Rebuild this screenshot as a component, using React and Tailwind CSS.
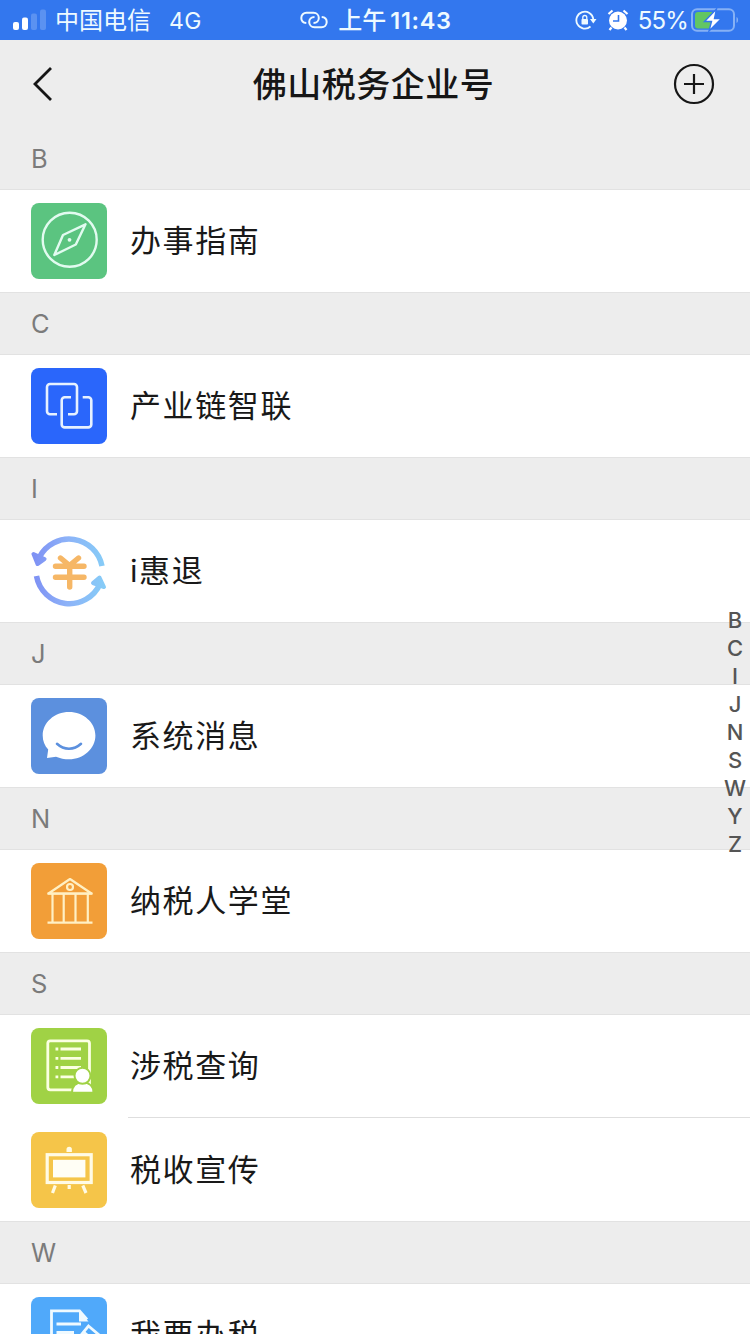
const sections = [
  { letter: 'B', items: [{ name: '办事指南', icon: CompassIcon }] },
  { letter: 'C', items: [{ name: '产业链智联', icon: ChainIcon }] },
  { letter: 'I', items: [{ name: 'i惠退', icon: RefundIcon }] },
  { letter: 'J', items: [{ name: '系统消息', icon: MessageIcon }] },
  { letter: 'N', items: [{ name: '纳税人学堂', icon: SchoolIcon }] },
  {
    letter: 'S',
    items: [
      { name: '涉税查询', icon: QueryIcon },
      { name: '税收宣传', icon: BoardIcon },
    ],
  },
  { letter: 'W', items: [{ name: '我要办税', icon: FormIcon }] },
];

const indexLetters = ['B', 'C', 'I', 'J', 'N', 'S', 'W', 'Y', 'Z'];

function Tile({ className, children }) {
  return (
    <svg viewBox="0 0 76 76" fill="none" className={`size-[76px] shrink-0 rounded-[8px] ${className}`}>
      {children}
    </svg>
  );
}

function CompassIcon() {
  return (
    <Tile className="bg-[#5bc480]">
      <g stroke="#e2fbf0" strokeWidth="2.4" strokeLinejoin="round">
        <circle cx="38.7" cy="36.8" r="27" />
        <path d="M23.3 52 32 32 54.500 21.300 44.800 41.500Z" />
      </g>
      <circle cx="38.500" cy="36.800" r="1.900" fill="#e2fbf0" />
    </Tile>
  );
}

function ChainIcon() {
  return (
    <Tile className="bg-[#2a66fb]">
      <g stroke="#e6f1ff" strokeWidth="2.6">
        <path d="M26 46.2H19a3 3 0 0 1-3-3V19a3 3 0 0 1 3-3h24a3 3 0 0 1 3 3v24.2a3 3 0 0 1-3 3h-6" />
        <path d="M40 29.2h-6.3a3 3 0 0 0-3 3v24.2a3 3 0 0 0 3 3h23.6a3 3 0 0 0 3-3V32.2a3 3 0 0 0-3-3h-5.6" />
      </g>
    </Tile>
  );
}

function RefundIcon() {
  return (
    <Tile className="bg-white">
      <defs>
        <linearGradient id="refund" x1="4" y1="0" x2="74" y2="0" gradientUnits="userSpaceOnUse">
          <stop stopColor="#7f92f4" />
          <stop offset="0.45" stopColor="#8db2f8" />
          <stop offset="1" stopColor="#86ccf7" />
        </linearGradient>
      </defs>
      <g stroke="url(#refund)" strokeWidth="5.5">
        <path d="M8.500 24A33.500 33.500 0 0 1 71 33" />
        <path d="M5.500 43A33.500 33.500 0 0 0 69 51" />
      </g>
      <g fill="url(#refund)" stroke="url(#refund)" strokeWidth="4" strokeLinejoin="round">
        <path d="M2.500 21 13.500 26 6.500 31Z" />
        <path d="M68.500 44.500 73 54 62 50Z" />
      </g>
      <g stroke="#f6b766" strokeWidth="5.400" strokeLinecap="round">
        <path d="M29.500 25 38.500 32.500 47.500 25M24.500 33.200h28.500M24.500 44.300h28.500M38.700 34v20" />
      </g>
    </Tile>
  );
}

function MessageIcon() {
  return (
    <Tile className="bg-[#5c90de]">
      <path
        d="M38 14C52.500 14 64.400 24.500 64.400 37.500S52.500 61.300 38 61.300C33.500 61.300 29 60.300 25 58.700L16 60 17.200 51.500C13.600 47.500 11.700 43 11.700 37.500 11.700 24.500 23.500 14 38 14Z"
        fill="#fff"
      />
      <path d="M26 45.800C33 52.300 43 52.300 50 45.800" stroke="#5c90de" strokeWidth="2.600" strokeLinecap="round" />
    </Tile>
  );
}

function SchoolIcon() {
  return (
    <Tile className="bg-[#f29e38]">
      <g stroke="#fff0c4" strokeWidth="2.200">
        <path d="M17.500 30.500 39 16 60.500 30.500Z" strokeLinejoin="round" />
        <circle cx="39" cy="24" r="3" />
        <path d="M21.500 31v28M32.700 31v28M44.500 31v28M56.800 31v28M16.500 59.700h45M16.500 30.700h45" />
      </g>
    </Tile>
  );
}

function QueryIcon() {
  return (
    <Tile className="bg-[#a0d245]">
      <rect x="16.800" y="12.800" width="41.700" height="49" rx="2.500" stroke="#fbffe2" strokeWidth="2.800" />
      <g stroke="#fbffe2" strokeWidth="2.800">
        <path d="M24.500 21h2.800M24.500 30.300h2.800M24.500 39.500h2.800M24.500 48.800h2.800" />
        <path d="M29.500 21H50M29.500 30.300H50M29.500 39.500H50M29.500 48.800H50" />
      </g>
      <g fill="#fff" stroke="#a0d245" strokeWidth="2">
        <path d="M41 64.700c0-6 3.500-10.200 10.500-10.200s11 4.200 11 10.200Z" />
        <circle cx="51.500" cy="47.800" r="8" />
      </g>
    </Tile>
  );
}

function BoardIcon() {
  return (
    <Tile className="bg-[#f5c549]">
      <rect x="16.200" y="22.700" width="44" height="27.800" stroke="#fffbe5" strokeWidth="3.200" />
      <rect x="22" y="27.800" width="32.400" height="17.600" fill="#fffef5" />
      <path d="M35.500 20v-2.500a2.700 2.700 0 0 1 5.400 0V20Z" fill="#fffbe5" />
      <path d="M24.300 53.500 21.500 61M51.800 53.500 55 61M38.200 53v4" stroke="#fffbe5" strokeWidth="3.200" />
    </Tile>
  );
}

function FormIcon() {
  return (
    <Tile className="bg-[#50a9fa]">
      <g stroke="#f0faff" strokeWidth="2.800">
        <path d="M50 62H20.500V13.800H48.500L56 22.500" />
        <path d="M25.500 27H50M25.500 35.500H43M25.500 44H38" />
        <path d="M57.500 29 67.500 37.500 50 57 40 60 41.500 48.500Z" />
        <path d="M52 34.500 62 43" />
      </g>
      <path d="M48 13.500 57.500 24.500H48Z" fill="#f0faff" />
    </Tile>
  );
}

function StatusBar() {
  return (
    <div className="grid h-10 grid-cols-[1fr_auto_1fr] items-center bg-[#3377ee] text-[#eefaff]">
      <div className="flex items-center pl-[13px] text-[24px]">
        <svg viewBox="0 0 34 22" className="mr-[8px] h-[22px] w-[34px]" fill="#fff">
          <rect x="0" y="13" width="6" height="8" rx="2" />
          <rect x="9" y="8.500" width="6" height="12.500" rx="2" />
          <rect x="18" y="4.500" width="6" height="16.500" rx="2" opacity=".2" />
          <rect x="27" y="0.500" width="6" height="20.500" rx="2" opacity=".2" />
        </svg>
        <span className="pt-[2px]">中国电信</span>
        <span className="ml-[18px] pt-[2px] text-[23px] tracking-[0.5px]">4G</span>
      </div>
      <div className="flex items-center pl-[2px]">
        <svg viewBox="0 0 28 18" className="mr-[10px] h-[18px] w-[28px]" fill="none" stroke="currentColor" strokeWidth="2">
          <path d="M6.300 12C3.300 11.800 1.300 9.800 1.300 7 1.300 4 3.500 1.800 6.500 1.800H13.500C16.700 1.800 18.800 4.200 18.800 7 18.800 9.800 16.800 12 13.500 12" />
          <path d="M21.700 6C24.700 6.200 26.700 8.200 26.700 11 26.700 14 24.500 16.200 21.500 16.200H14.500C11.300 16.200 9.200 13.800 9.200 11 9.200 8.200 11.200 6 14.500 6" />
        </svg>
        <span className="pt-[2px] text-[24px] font-medium">上午</span>
        <span className="ml-[4px] pt-[2px] text-[23.500px] font-semibold tracking-[0.700px]">11:43</span>
      </div>
      <div className="flex items-center justify-end pr-[11px]">
        {/* rotation lock */}
        <svg viewBox="0 0 22 20" className="h-[20px] w-[22px]" fill="none" stroke="currentColor" strokeWidth="1.800">
          <path d="M15.500 16.500A8.500 8.500 0 1 1 18.300 9" />
          <path d="M15 9h6.500l-3.200 4.500Z" fill="currentColor" stroke="none" />
          <rect x="6.500" y="9" width="6.500" height="5.500" rx=".8" fill="currentColor" stroke="none" />
          <path d="M7.800 9V7.500a2 2 0 0 1 4 0V9" strokeWidth="1.300" />
        </svg>
        {/* alarm */}
        <svg viewBox="0 0 22 22" className="ml-[10px] h-[22px] w-[22px]" fill="none">
          <circle cx="11" cy="11.500" r="9" fill="#fff" />
          <path d="M1.500 5 5.500 1.500M20.500 5 16.500 1.500M4.500 18.500 2.500 21M17.500 18.500l2 2.500" stroke="#fff" strokeWidth="2.200" />
          <path d="M11.500 6v6H6" stroke="#3377ee" strokeWidth="1.600" />
        </svg>
        <span className="ml-[9px] pt-[2px] text-[24px] tracking-[-0.800px]">55%</span>
        <svg viewBox="0 0 48 24" className="ml-[3px] h-[24px] w-[48px]" fill="none">
          <rect x="1" y="1.200" width="42" height="21.500" rx="5" stroke="#86b1f5" strokeWidth="2" />
          <path d="M7 4h14v16.500H7a3 3 0 0 1-3-3V7a3 3 0 0 1 3-3Z" fill="#62c663" />
          <path d="M45.500 9c2 .5 2 5.500 0 6Z" fill="#86b1f5" />
          <path d="M25.500 1 13.500 13.500h7L18 23 30.500 10.500h-7Z" fill="#fff" stroke="#3377ee" strokeWidth="1.400" />
        </svg>
      </div>
    </div>
  );
}

function NavBar() {
  return (
    <div className="flex h-[88px] items-center justify-between bg-[#ededed] pr-[35px] pl-[32px] text-[#161616]">
      <svg viewBox="0 0 42 40" className="h-[40px] w-[42px]" fill="none" stroke="currentColor" strokeWidth="2.800">
        <path d="M19 4 3 20 19 36" />
      </svg>
      <h1 className="pt-[2px] text-[34px] leading-none font-medium tracking-[0.500px]">佛山税务企业号</h1>
      <svg viewBox="0 0 42 42" className="h-[42px] w-[42px]" fill="none" stroke="currentColor" strokeWidth="2.200">
        <circle cx="21" cy="21" r="19" />
        <path d="M21 11v20M11 21h20" />
      </svg>
    </div>
  );
}

export default function App() {
  return (
    <div className="relative h-[1334px] w-[750px] overflow-hidden bg-white font-['Inter','Noto_Sans_CJK_SC',sans-serif]">
      <StatusBar />
      <NavBar />
      {sections.map(({ letter, items }) => (
        <section key={letter} className="group">
          <div className="flex h-[63px] items-center border-y border-[#e2e2e2] bg-[#ededed] pt-px pl-[31px] text-[25.500px] text-[#7b7b7b] group-first-of-type:h-[62px] group-first-of-type:border-t-0">
            {letter}
          </div>
          {items.map(({ name, icon: Icon }, i) => (
            <div key={name}>
              {i > 0 && <div className="mb-px ml-32 h-px bg-[#dedede]" />}
              <div className="flex h-[102px] items-center pl-[31px]">
                <Icon />
                <span className="ml-[23px] pb-[2px] text-[31px] leading-none tracking-[1.600px] text-[#191919]">{name}</span>
              </div>
            </div>
          ))}
        </section>
      ))}

      {/* Alphabet index */}
      <div className="absolute top-[606px] right-0 flex w-[30px] flex-col text-center text-[22px] leading-[28px] font-medium text-[#555]">
        {indexLetters.map((letter) => (
          <span key={letter}>{letter}</span>
        ))}
      </div>
    </div>
  );
}
